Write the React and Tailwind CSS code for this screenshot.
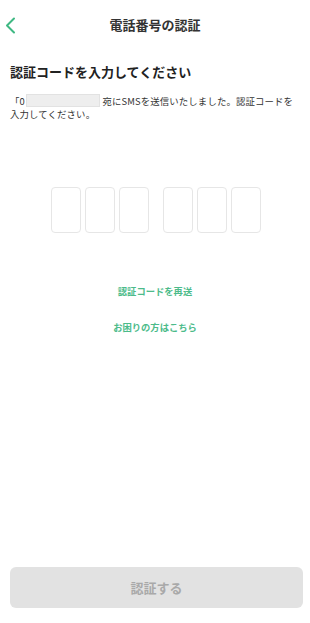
import React from "react";

export default function App() {
  const font = { fontFamily: '"Noto Sans CJK JP", "Noto Sans", sans-serif' };
  const Box = () => (
    <div className="w-[30px] h-[46px] rounded-[4px] border border-[#e6e6e6] bg-white" />
  );
  return (
    <div className="w-[310px] h-[623px] bg-white flex flex-col text-[#222]" style={font}>
      <div className="relative h-[50px] flex items-center justify-center">
        <button className="absolute left-[3px] top-[16px] w-[14px] h-[18px] flex items-center justify-center">
          <svg width="11" height="17" viewBox="0 0 11 17" fill="none">
            <path d="M9 1.5L2 8.5L9 15.5" stroke="#3fb883" strokeWidth="2" strokeLinecap="round" strokeLinejoin="round" />
          </svg>
        </button>
        <h1 className="text-[13px] font-bold leading-[18px] text-[#333]">電話番号の認証</h1>
      </div>
      <div className="px-[10px] pt-[13px]">
        <h2 className="text-[13px] font-bold leading-[18px] text-[#222]">認証コードを入力してください</h2>
        <p className="mt-[14px] text-[9.4px] leading-[13px] text-[#333] tracking-[0.15px]">
          「0
          <span className="relative z-10 inline-block align-middle w-[74px] h-[13px] bg-[#eeeeee] border border-[#e2e2e2] mt-[-3px] ml-[1px] mr-[-7px]" />
          」宛にSMSを送信いたしました。認証コードを
          <br />
          入力してください。
        </p>
      </div>
      <div className="mt-[66px] flex justify-center items-start pl-[2px]">
        <div className="flex gap-[4px]">
          <Box />
          <Box />
          <Box />
        </div>
        <div className="w-[14px]" />
        <div className="flex gap-[4px]">
          <Box />
          <Box />
          <Box />
        </div>
      </div>
      <div className="mt-[52px] flex flex-col items-center text-[9.3px] font-bold text-[#4cbb8a] leading-[12px]">
        <a className="block">認証コードを再送</a>
        <a className="block mt-[24px]">お困りの方はこちら</a>
      </div>
      <div className="mt-auto px-[10px] pb-[15px]">
        <button className="w-[293px] h-[41px] rounded-[6px] bg-[#e2e2e2] text-[13px] font-bold text-[#a9a9a9]">
          認証する
        </button>
      </div>
    </div>
  );
}
